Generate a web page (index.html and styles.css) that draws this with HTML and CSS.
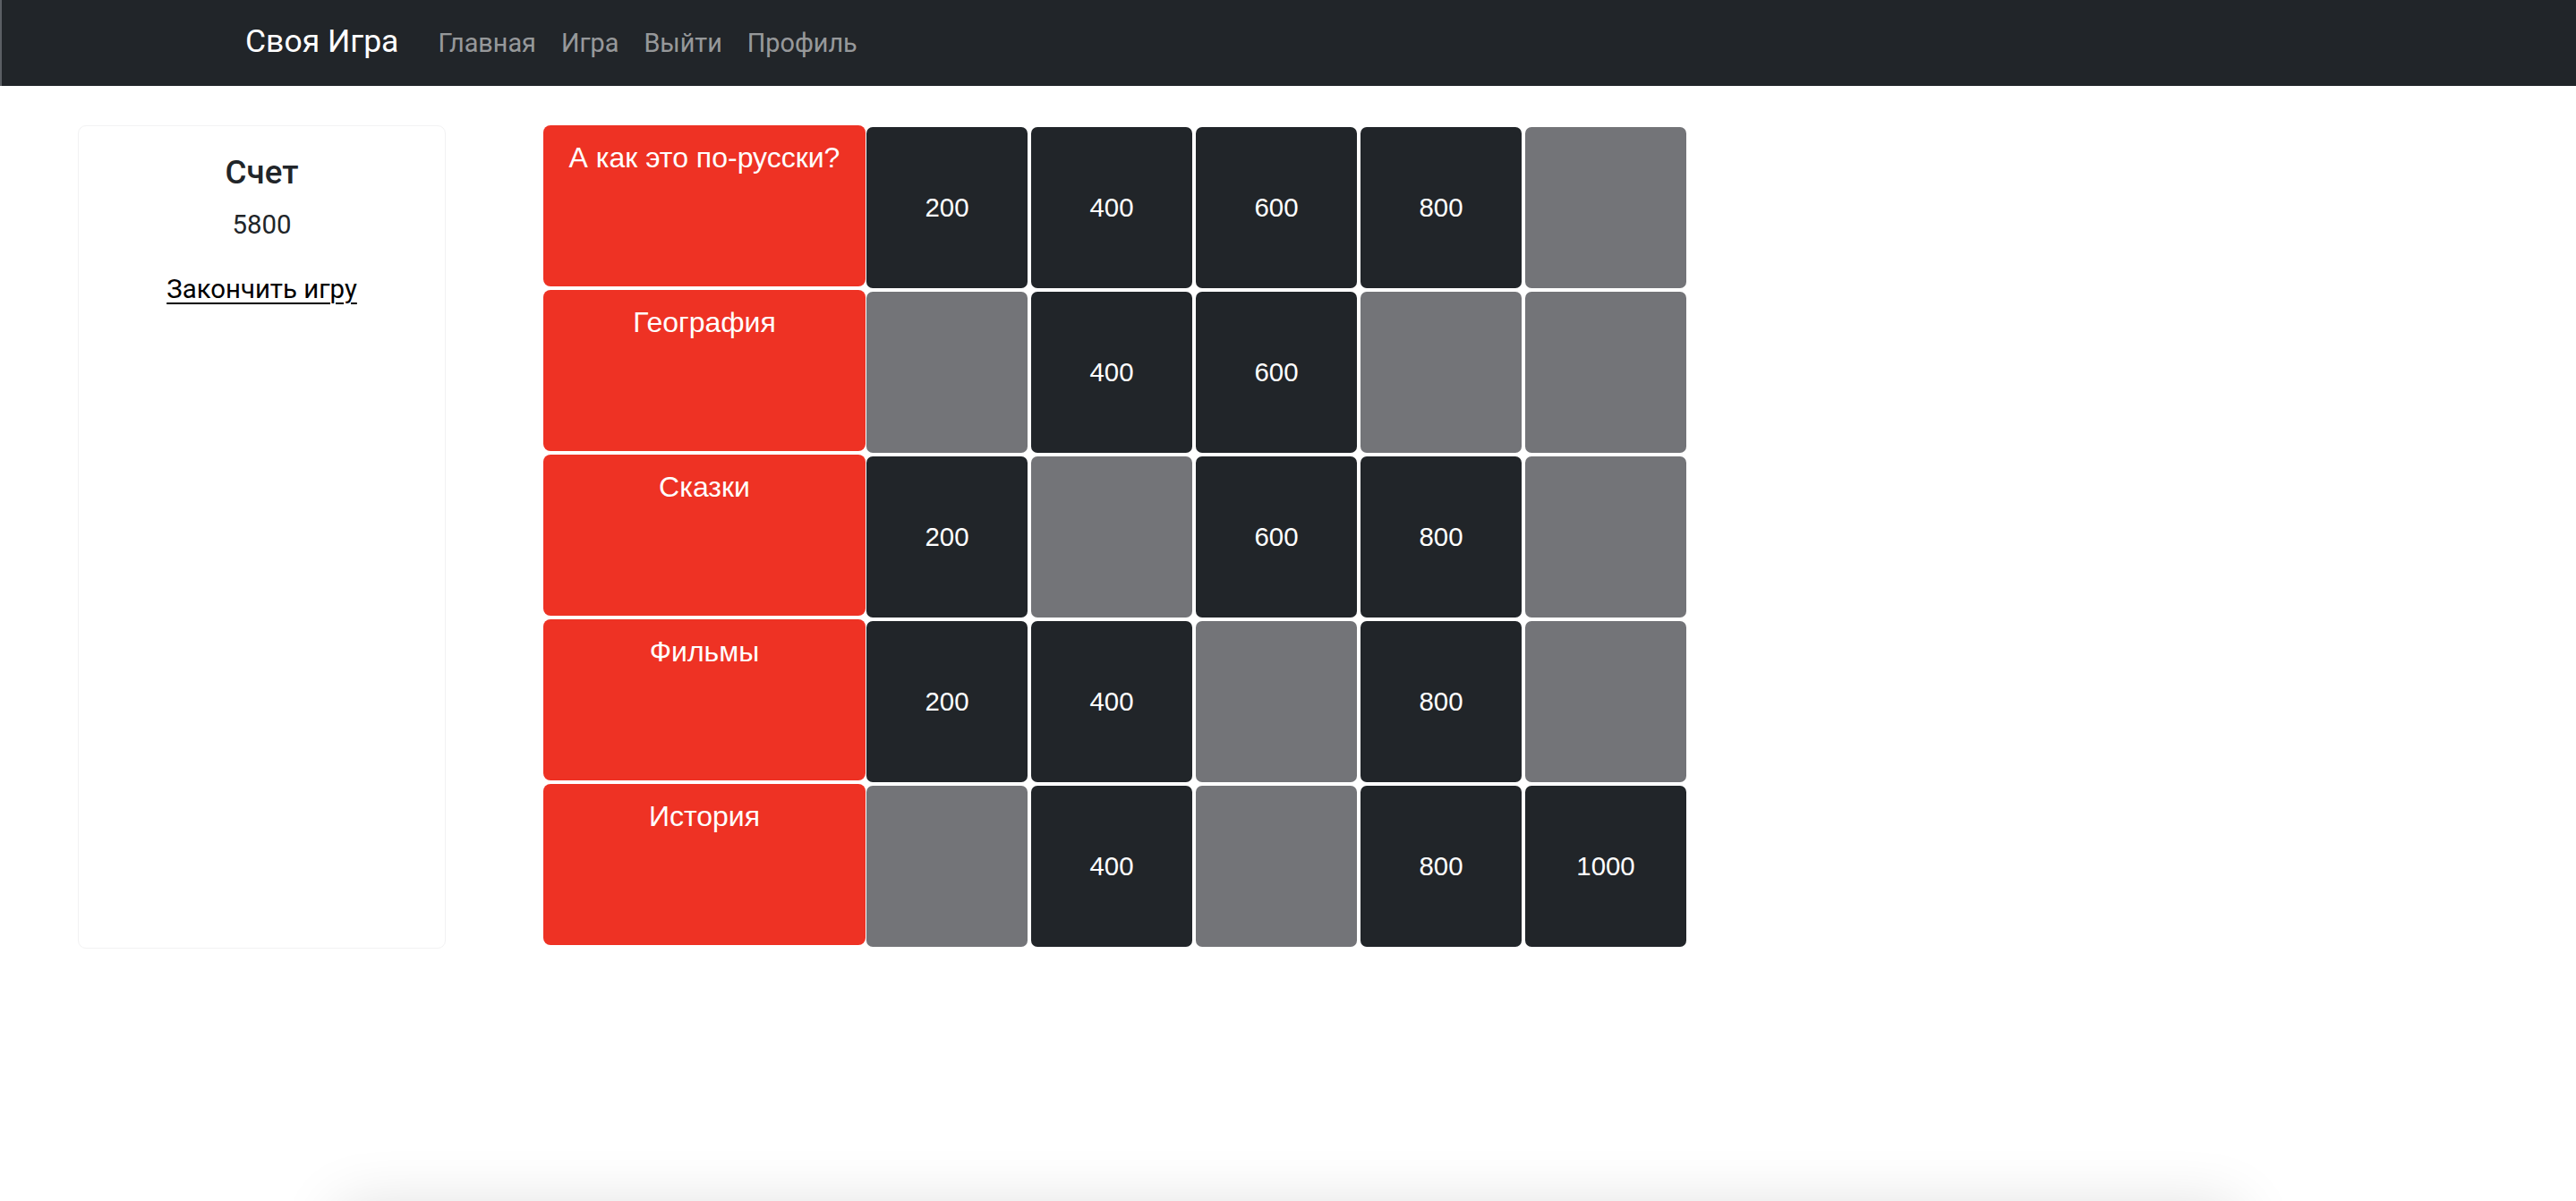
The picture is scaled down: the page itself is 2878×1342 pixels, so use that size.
FILE: index.html
```html
<!DOCTYPE html>
<html lang="ru">
<head>
<meta charset="utf-8">
<title>Своя Игра</title>
<link rel="stylesheet" href="styles.css">
</head>
<body>
<nav class="navbar">
  <a class="brand" href="#">Своя Игра</a>
  <ul class="nav">
    <li><a class="nav-link" href="#">Главная</a></li>
    <li><a class="nav-link" href="#">Игра</a></li>
    <li><a class="nav-link" href="#">Выйти</a></li>
    <li><a class="nav-link" href="#">Профиль</a></li>
  </ul>
</nav>
<main class="main">
  <aside class="score-card">
    <h5 class="score-title">Счет</h5>
    <p class="score-value">5800</p>
    <a class="finish-link" href="#">Закончить игру</a>
  </aside>
  <section class="board">
    <div class="board-row">
      <div class="category">А как это по-русски?</div>
      <div class="cell">200</div>
      <div class="cell">400</div>
      <div class="cell">600</div>
      <div class="cell">800</div>
      <div class="cell used"></div>
    </div>
    <div class="board-row">
      <div class="category">География</div>
      <div class="cell used"></div>
      <div class="cell">400</div>
      <div class="cell">600</div>
      <div class="cell used"></div>
      <div class="cell used"></div>
    </div>
    <div class="board-row">
      <div class="category">Сказки</div>
      <div class="cell">200</div>
      <div class="cell used"></div>
      <div class="cell">600</div>
      <div class="cell">800</div>
      <div class="cell used"></div>
    </div>
    <div class="board-row">
      <div class="category">Фильмы</div>
      <div class="cell">200</div>
      <div class="cell">400</div>
      <div class="cell used"></div>
      <div class="cell">800</div>
      <div class="cell used"></div>
    </div>
    <div class="board-row">
      <div class="category">История</div>
      <div class="cell used"></div>
      <div class="cell">400</div>
      <div class="cell used"></div>
      <div class="cell">800</div>
      <div class="cell">1000</div>
    </div>
  </section>
</main>
<footer class="footer"></footer>
</body>
</html>
```
FILE: styles.css
```css
html, body {
  margin: 0;
  padding: 0;
  background: #ffffff;
}

body {
  font-family: Roboto, "Liberation Sans", sans-serif;
  font-size: 29.4px;
  color: #212529;
  overflow: hidden;
}

.navbar {
  display: flex;
  align-items: center;
  height: 96px;
  background: #212529;
  border-left: 2px solid #5b5f64;
  padding-left: 272px;
  box-sizing: border-box;
}

.brand {
  color: #ffffff;
  font-size: 35.5px;
  text-decoration: none;
  margin-right: 30px;
  line-height: 1;
  margin-top: -2px;
}

.nav {
  display: flex;
  list-style: none;
  margin: 0;
  padding: 0;
}

.nav-link {
  display: block;
  padding: 0 14px;
  color: rgba(255, 255, 255, 0.55);
  font-size: 28.8px;
  text-decoration: none;
  line-height: 1;
}

.main {
  display: flex;
  align-items: stretch;
  gap: 109px;
  padding: 44px 0 0 87px;
}

.score-card {
  width: 411px;
  box-sizing: border-box;
  border: 1px solid #f2f2f3;
  border-radius: 9px;
  padding: 30px 20px;
  text-align: center;
  display: flex;
  flex-direction: column;
  align-items: center;
}

.score-title {
  margin: 0 0 14px 0;
  font-size: 36.7px;
  font-weight: 500;
  line-height: 1.2;
  color: #212529;
}

.score-value {
  margin: 0 0 28px 0;
  line-height: 1.5;
  color: #212529;
}

.finish-link {
  color: #000000;
  text-decoration: underline;
  text-underline-offset: 5px;
  text-decoration-thickness: 2px;
  line-height: 1.5;
}

.board {
  display: flex;
  flex-direction: column;
}

.board-row {
  display: flex;
  height: 184px;
}

.category {
  width: 360px;
  height: 180px;
  box-sizing: border-box;
  background: #ee3224;
  border-radius: 8px;
  color: #ffffff;
  font-family: "Liberation Sans", Arial, sans-serif;
  font-size: 32px;
  line-height: 1.5;
  text-align: center;
  padding-top: 12px;
}

.cell {
  width: 180px;
  height: 180px;
  margin: 2px;
  border-radius: 7px;
  background: #212529;
  color: #ffffff;
  font-family: "Liberation Sans", Arial, sans-serif;
  font-size: 29.4px;
  display: flex;
  align-items: center;
  justify-content: center;
}

.cell:nth-child(2) {
  margin-left: 1px;
}

.cell.used {
  background: #737478;
}

.footer {
  width: 2120px;
  height: 200px;
  margin: 290px auto 0;
  box-shadow: 0 0 70px rgba(0, 0, 0, 0.14);
  background: #ffffff;
}
```
